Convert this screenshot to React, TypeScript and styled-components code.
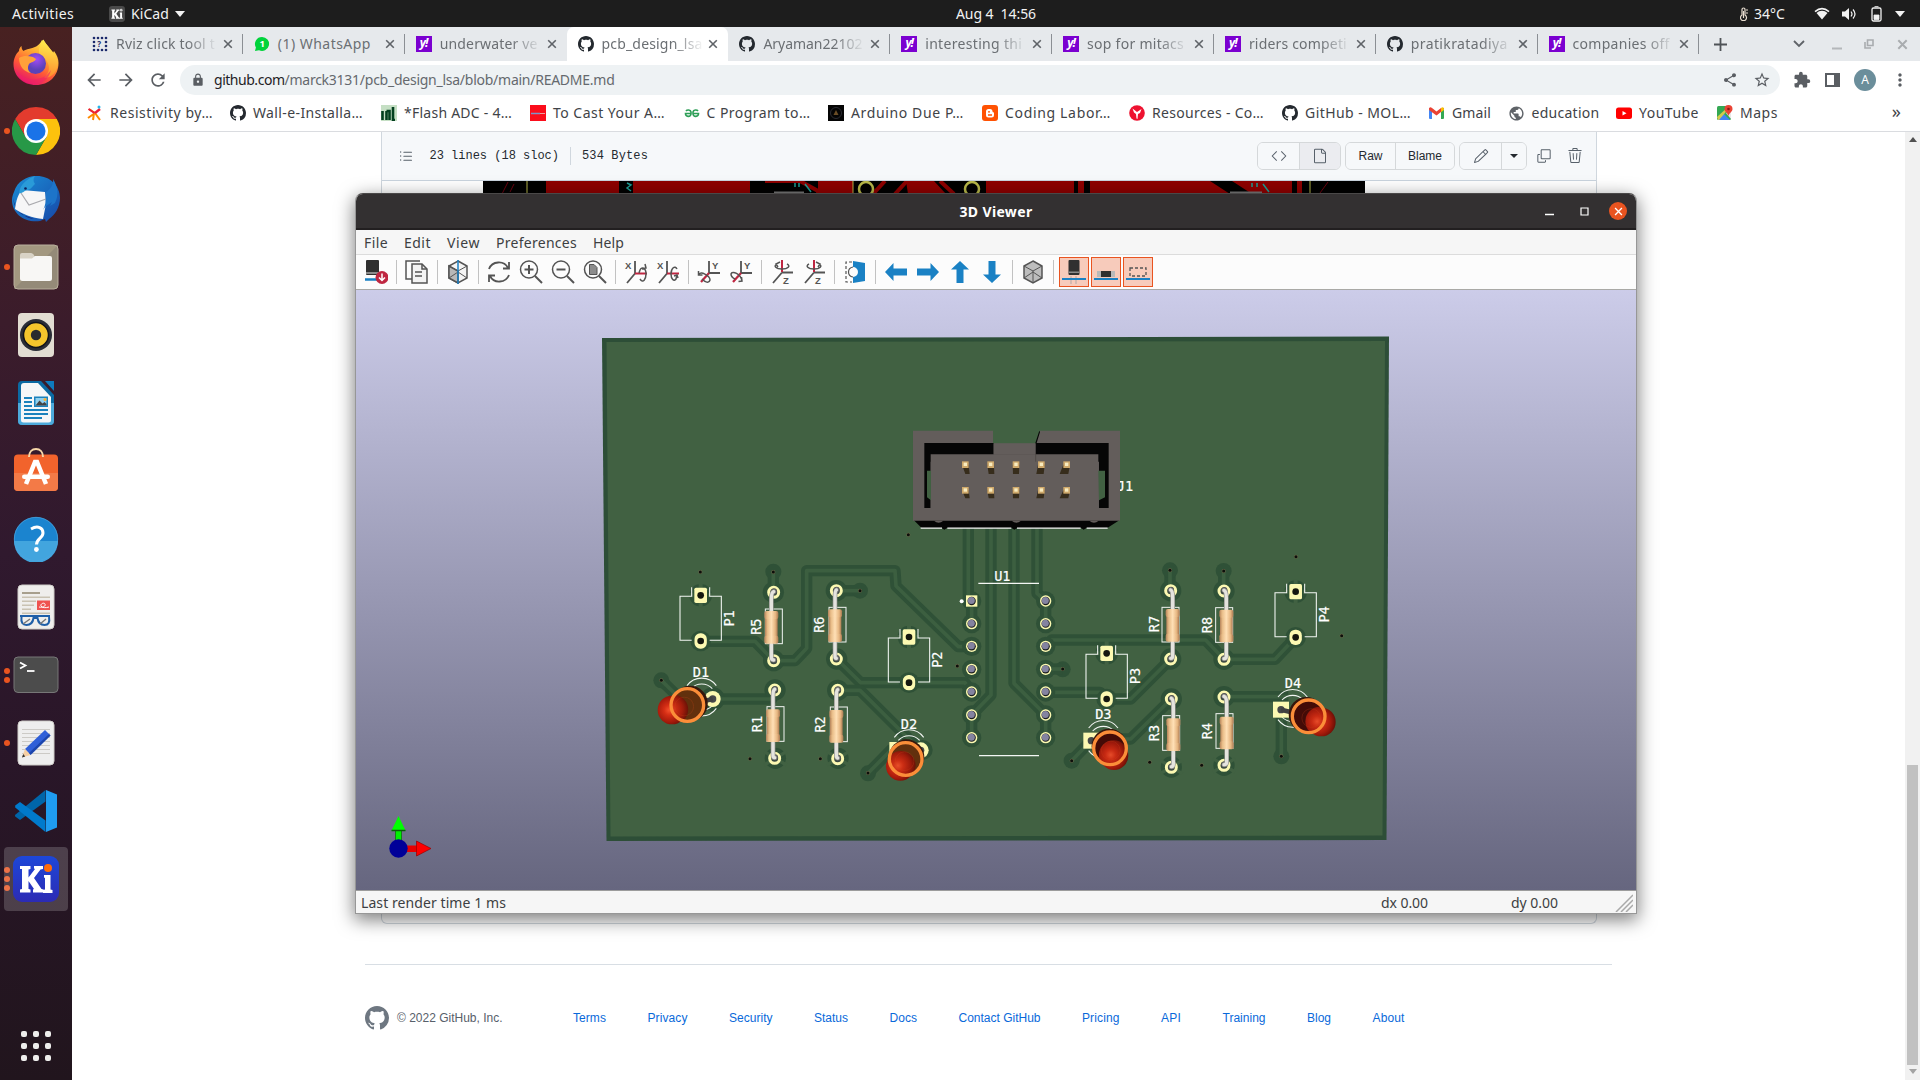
import React, { type ReactNode } from 'react';
import styled, { createGlobalStyle } from 'styled-components';
import { MdArrowBack, MdArrowForward, MdRefresh, MdLock, MdShare, MdStarBorder, MdExtension, MdMoreVert, MdPublic } from 'react-icons/md';
import { GoCode, GoFile, GoPencil, GoCopy, GoTrash, GoListUnordered } from 'react-icons/go';

const UI = '"Noto Sans", "Open Sans", sans-serif';
const ARIAL = '"Liberation Sans", Arial, sans-serif';
const MONO = '"Liberation Mono", "DejaVu Sans Mono", monospace';

const Global = createGlobalStyle`
  * { box-sizing: border-box; }
  html, body { margin: 0; padding: 0; overflow: hidden; background: #fff; }
  svg { display: block; flex: none; }
`;

/* ---------- text tracked to a given run length ---------- */
const pen = document.createElement('canvas').getContext('2d');
function tracking(text: string, font: string, width: number) {
  if (!pen) return 0;
  pen.font = font;
  return (width - pen.measureText(text).width) / text.length;
}
const Run = styled.span<{ $size: number; $weight: number; $family: string; $color?: string; $w: number }>`
  display: block;
  flex: none;
  width: ${p => p.$w}px;
  white-space: pre;
  line-height: 20px;
  font-family: ${p => p.$family};
  font-size: ${p => p.$size}px;
  font-weight: ${p => p.$weight};
  ${p => p.$color && `color: ${p.$color};`}
`;
function Fit({ t, w, size = 14, weight = 400, family = UI, color }: { t: string; w: number; size?: number; weight?: number; family?: string; color?: string }) {
  const ls = tracking(t, `${weight} ${size}px ${family}`, w);
  return <Run $size={size} $weight={weight} $family={family} $color={color} $w={w} style={{ letterSpacing: ls }}>{t}</Run>;
}

/* ---------- shell ---------- */
const Desktop = styled.div`
  position: relative;
  width: 1920px;
  height: 1080px;
  display: flex;
  flex-direction: column;
  overflow: hidden;
  background: #fff;
  font-family: ${UI};
`;
const TopBar = styled.header`
  height: 27px;
  flex: none;
  display: flex;
  align-items: center;
  padding: 0 15px 0 12px;
  background: #1d1d1d;
  color: #f2f2f2;
`;
const BarGroup = styled.div<{ $w: number; $end?: boolean }>`
  width: ${p => p.$w}px;
  flex: none;
  display: flex;
  align-items: center;
  justify-content: ${p => (p.$end ? 'flex-end' : 'flex-start')};
`;
const Gap = styled.i<{ $w: number }>`
  flex: none;
  width: ${p => p.$w}px;
`;
const Body = styled.div`
  flex: 1;
  display: flex;
  min-height: 0;
`;

/* ---------- dock ---------- */
const DockBar = styled.nav`
  width: 72px;
  flex: none;
  display: flex;
  flex-direction: column;
  padding-top: 2px;
  background: linear-gradient(#482121, #3b1c2b 28%, #30192e 50%, #291628 70%, #21151d);
`;
const Slot = styled.div`
  height: 68px;
  flex: none;
  display: flex;
  align-items: center;
`;
const Dots = styled.div`
  width: 6px;
  margin-left: 4px;
  display: flex;
  flex-direction: column;
  gap: 3px;
`;
const Dot = styled.i`
  width: 6px;
  height: 6px;
  border-radius: 50%;
  background: #e95420;
`;
const Tile = styled.div<{ $on?: boolean }>`
  width: 64px;
  height: 64px;
  margin-left: -6px;
  border-radius: 4px;
  display: flex;
  align-items: center;
  justify-content: center;
  background: ${p => (p.$on ? 'rgba(255,255,255,.18)' : 'transparent')};
`;
const GridButton = styled.div`
  margin: auto 0 19px 21px;
  display: grid;
  grid-template-columns: repeat(3, 6px);
  gap: 6px;
  i { height: 6px; border-radius: 2px; background: #eeeeec; }
`;

const Firefox = () => (
  <svg width="48" height="48" viewBox="0 0 48 48">
    <defs>
      <linearGradient id="ff1" x1=".8" y1="0" x2=".3" y2="1"><stop offset="0" stopColor="#fff44f" /><stop offset=".35" stopColor="#ffa932" /><stop offset=".65" stopColor="#ff5a36" /><stop offset="1" stopColor="#e3106f" /></linearGradient>
      <radialGradient id="ff2" cx=".55" cy=".3"><stop offset="0" stopColor="#a24cf5" /><stop offset="1" stopColor="#5b42b8" /></radialGradient>
      <linearGradient id="ff3" x1=".7" y1="0" x2=".6" y2="1"><stop offset="0" stopColor="#fff44f" /><stop offset="1" stopColor="#ff8c2e" /></linearGradient>
    </defs>
    <path d="M24 46C11 46 1.500 37 1.500 25c0-5 2.300-10 5.500-13 0-2 1-4 2.500-5 0 2 .6 4 2 5 1.500-1 3.500-2 5-2 5-1 11-3 13.500-9C35 5 38 9 41 14l1-2c3 4 4.500 8 4.500 12C46.500 37 37 46 24 46z" fill="url(#ff1)" />
    <path d="M27 10c1-4 2-7 4.500-9.500 2 3 3 6 8 11 3 3 6.500 8 6.500 13-1 10-8 15-14 14 5-4 6-9 4-14s-6-8-9-9z" fill="url(#ff3)" />
    <circle cx="23.500" cy="24.500" r="10.500" fill="url(#ff2)" />
    <path d="M7 19c5-3 9-2 14-1l3 2c-1 3-5 3-7 5-2 4-1 7 2 9-7-1-12-7-12-15z" fill="#ffa13a" />
    <path d="M3 28c3 9 13 14 22 12 6-1 10-3 14-9-2 9-9 14-16 14C12 45 5 38 3 28z" fill="#f0206a" opacity=".55" />
  </svg>
);
const Chrome = () => (
  <svg width="48" height="48" viewBox="0 0 48 48">
    <path d="M24 0A24 24 0 0 1 44.800 12H24L13.600 30 3.200 12A24 24 0 0 1 24 0z" fill="#e33b2e" />
    <path d="M44.800 12A24 24 0 0 1 24 48L34.400 30 24 12z" fill="#fcc20d" />
    <path d="M3.200 12A24 24 0 0 0 24 48L34.400 30H13.600z" fill="#279847" />
    <circle cx="24" cy="24" r="12" fill="#fff" /><circle cx="24" cy="24" r="9.500" fill="#1a73e8" />
  </svg>
);
const Thunderbird = () => (
  <svg width="50" height="50" viewBox="0 0 50 50">
    <defs><linearGradient id="tb" x1="0" y1="0" x2="1" y2="1"><stop offset="0" stopColor="#1b8fd6" /><stop offset="1" stopColor="#1747a8" /></linearGradient></defs>
    <path d="M3 18C6 7 17 2 24 2c14-1 25 9 25 22 0 9-5 17-11 21l-3 3-1-3-5 2C14 49 1 40 1 26c0-3 1-6 2-8z" fill="url(#tb)" />
    <path d="M2 24c2 12 11 20 21 21L12 41C6 37 3 32 2 24z" fill="#1c1260" />
    <path d="M4 35C5 27 7 20 11 16l23 2 1 12-3 15c-11-1-21-5-28-10z" fill="#f6f6f7" />
    <path d="M10 19l8 12 17-6" fill="none" stroke="#a9a9ae" strokeWidth="1.200" />
    <path d="M8 19c1-9 9-15 16-17-2 3-2 5 0 8-3 3-5 6-8 6-3 1-5 4-8 3z" fill="#2a9bd8" />
    <path d="M35 18c4-2 8-8 7-13 5 8 6 16 2 24l-5 3 2-4c-4 3-7 4-9 8 3-5 3-12 3-18z" fill="#1d74c9" />
    <circle cx="14.500" cy="14.500" r="1.300" fill="#0d1f5c" />
  </svg>
);
const Files = () => (
  <svg width="46" height="46" viewBox="0 0 46 46">
    <rect x="1" y="1" width="44" height="44" rx="4" fill="#a39880" /><path d="M1 45 45 1v40q0 4-4 4z" fill="#948a78" />
    <rect x="1" y="1" width="44" height="44" rx="4" fill="none" stroke="#b9af9d" />
    <path d="M7 17v-6q0-2 2-2h9q1.500 0 2.500 1.500L22 13v4z" fill="#d9d3c6" />
    <path d="M7 14.500h12l3-2.500h15q2 0 2 2v20.500q0 2.500-2.500 2.500h-27Q7 37 7 34.500z" fill="#f8f7f5" />
  </svg>
);
const Rhythm = () => (
  <svg width="38" height="46" viewBox="0 0 38 46">
    <rect x="1" y="1" width="36" height="44" rx="4" fill="#e2ddd2" /><circle cx="19" cy="23" r="16" fill="#2a2d36" />
    <circle cx="19" cy="23" r="12.500" fill="#f4c52c" stroke="#11131a" strokeWidth="1.500" /><circle cx="19" cy="23" r="5.200" fill="#2a2a2e" />
  </svg>
);
const Writer = () => (
  <svg width="38" height="46" viewBox="0 0 38 46">
    <path d="M5 1h19l13 14v26q0 4-4 4H5q-4 0-4-4V5q0-4 4-4z" fill="#0b6aa3" /><path d="M1 23h36v18q0 4-4 4H5q-4 0-4-4z" fill="#4daadb" />
    <path d="M28 1h9v10z" fill="#0e7bbd" /><path d="M7 3h14l13 14v23q0 2.500-2.500 2.500h-25Q4 42.500 4 40V6q0-3 3-3z" fill="#f5f7f8" />
    <g fill="#1b82bd"><path d="M7 17h8v2H7zM7 21h8v2H7zM7 25h8v2H7zM7 29h24v2H7zM7 33h24v2H7zM7 37h18v2H7z" /><path d="M17 16.500h14v10.500H17z" /></g>
    <path d="M18.500 18h11v7.500h-11z" fill="#8fd0ee" /><path d="m18.500 25.500 4-5 3 3 2-1.500 2 2v1.500z" fill="#444" /><circle cx="28" cy="19.500" r="1.500" fill="#f9b233" />
  </svg>
);
const Software = () => (
  <svg width="46" height="46" viewBox="0 2 46 46">
    <rect x="1" y="8.500" width="44" height="36.500" rx="4" fill="#f2632c" /><path d="M1 27h44v14q0 4-4 4H5q-4 0-4-4z" fill="#f37a47" />
    <path d="M16 11c0-5 3-8 7-8s7 3 7 8" fill="none" stroke="#f6d7a8" strokeWidth="2" />
    <path d="M13 38 22 16h2l9 22" fill="none" stroke="#fff" strokeWidth="4.500" /><rect x="9" y="28.500" width="28" height="4.500" rx="2.200" fill="#fff" />
  </svg>
);
const HelpIcon = () => (
  <svg width="46" height="46" viewBox="0 0 46 46">
    <circle cx="23" cy="23" r="22" fill="#1b84cf" /><path d="M1 25a22 22 0 0 0 44 0z" fill="#42a5de" /><circle cx="23" cy="23" r="21.700" fill="none" stroke="#4ea6df" strokeWidth=".7" />
    <path d="M18 13c7-4 12-1 12 4 0 5-6.500 6-6.500 11.500" fill="none" stroke="#fff" strokeWidth="3" /><circle cx="23.400" cy="33.500" r="2.400" fill="#fff" />
  </svg>
);
const DocViewer = () => (
  <svg width="38" height="46" viewBox="0 0 38 46">
    <rect x="1" y="1" width="36" height="44" rx="4" fill="#efeeec" stroke="#cfcdc9" /><path d="M5 10h18v-2H5z" fill="#a79f8d" />
    <path d="M5 14h28v-1.500H5zM5 18h14v-1.500H5zM5 22h12v-1.500H5zM5 26h9v-1.500H5zM5 30h28v-1.500H5z" fill="#c9c2b2" />
    <path d="M20 16.500h13V26H20z" fill="#ef5350" /><path d="M22 23c4 1 7-1 6-3s-5 0-4 2 5 2 8 1" fill="none" stroke="#fff" />
    <path d="M3 32h30M4.500 33q-1 8 5 8t7-7h4q1 7 7 7t4.500-8" fill="none" stroke="#1f5fa8" strokeWidth="2" /><path d="m6 40 7-5M23 40l6-5" stroke="#777" strokeWidth="1.500" />
  </svg>
);
const Terminal = () => (
  <svg width="46" height="38" viewBox="0 0 46 38">
    <rect x="1" y="1" width="44" height="35.500" rx="4" fill="#4c4c4c" stroke="#777" /><path d="m7 6.500 5.500 3L7 12.500" fill="none" stroke="#fff" strokeWidth="1.800" /><path d="M14 15h7.500" stroke="#fff" strokeWidth="1.800" />
  </svg>
);
const Editor = () => (
  <svg width="38" height="46" viewBox="0 0 38 46">
    <rect x="1" y="1" width="36" height="44" rx="4" fill="#eeeeee" stroke="#cfcdc9" />
    <path d="M5 9.500h28M5 13.500h28M5 17.500h28M5 21.500h28M5 25.500h28M5 29.500h28M5 33.500h28" stroke="#cccac6" />
    <path d="m8 29 20-19 5.500 5.500L13.500 35z" fill="#2f5fd8" /><path d="m12 33 20-19 1.500 1.500L13.500 35z" fill="#1c45ac" /><path d="m8 29 5.500 6L5 37.500z" fill="#f6cfa3" /><path d="m6.200 34 2 2.500L5 37.500z" fill="#333" />
  </svg>
);
const Code = () => (
  <svg width="44" height="44" viewBox="0 0 44 44">
    <path d="M31.500 1v11.500L6 31 1.200 27.500 1 26z" fill="#0065a9" /><path d="M31.500 43V31.500L6 13l-4.800 3.500v2z" fill="#007acc" /><path d="M32 1l11 4.500v33L32 43z" fill="#1f9cf0" />
  </svg>
);
const KiIcon = ({ s = 46, mono }: { s?: number; mono?: boolean }) => (
  <svg width={s} height={s} viewBox="0 0 46 46">
    <defs><linearGradient id="ki" x1="0" y1="0" x2="0" y2="1"><stop offset="0" stopColor="#1d47d8" /><stop offset="1" stopColor="#2c2bb4" /></linearGradient></defs>
    <rect width="46" height="46" rx="9" fill={mono ? '#4a4a4a' : 'url(#ki)'} />
    <path d="M7 10h10.500v3l-2 .5v8L22 13l-1-.5V10h9v3l-2.500.5-6.500 8.500 7.500 11 2 .5v3H20v-3l1-.5-5.500-8v8l2 .5v3H7v-3l2-.5v-20L7 13zM31 19h6.500v14.500l2 .5v3H30v-3l2-.5V22l-1-.5z" fill="#fff" />
    <circle cx="35" cy="12" r="4" fill={mono ? '#ccc' : '#ff6b0a'} />
  </svg>
);

const dock: { icon: ReactNode; dots: number; on?: boolean }[] = [
  { icon: <Firefox />, dots: 0 }, { icon: <Chrome />, dots: 1 }, { icon: <Thunderbird />, dots: 0 }, { icon: <Files />, dots: 1 },
  { icon: <Rhythm />, dots: 0 }, { icon: <Writer />, dots: 0 }, { icon: <Software />, dots: 0 }, { icon: <HelpIcon />, dots: 0 },
  { icon: <DocViewer />, dots: 0 }, { icon: <Terminal />, dots: 2 }, { icon: <Editor />, dots: 1 }, { icon: <Code />, dots: 0 }, { icon: <KiIcon />, dots: 3, on: true },
];

/* ---------- browser ---------- */
const Browser = styled.main`
  flex: 1;
  min-width: 0;
  display: flex;
  flex-direction: column;
`;
const TabStrip = styled.div`
  height: 34px;
  flex: none;
  display: flex;
  padding-left: 9px;
  background: #e6e9ec;
`;
const TabBox = styled.div<{ $on: boolean; $line: boolean }>`
  width: 161.850px;
  flex: none;
  display: flex;
  align-items: center;
  position: relative;
  padding: 0 10px 0 11px;
  color: #6b6f73;
  background: ${p => (p.$on ? '#fff' : 'transparent')};
  border-radius: 7px 7px 0 0;
  &::after {
    content: '';
    position: absolute;
    right: 0;
    top: 7px;
    width: 1px;
    height: 20px;
    background: ${p => (p.$line ? '#8b8f94' : 'transparent')};
  }
`;
const TabTitle = styled.div<{ $fade: boolean }>`
  width: 102px;
  flex: none;
  margin-left: 8px;
  mask-image: ${p => (p.$fade ? 'linear-gradient(90deg, #000 70%, transparent 100%)' : 'none')};
`;
const StripButtons = styled.div`
  flex: 1;
  display: flex;
  align-items: center;
  justify-content: space-between;
  padding: 0 12px 0 15px;
`;
const StripRight = styled.div`
  display: flex;
  align-items: center;
`;
const Toolbar = styled.div`
  height: 38px;
  flex: none;
  display: flex;
  align-items: center;
  padding: 0 10px 0 12px;
  color: #5a5e63;
`;
const NavIcons = styled.div`
  width: 96px;
  display: flex;
  gap: 12px;
`;
const Address = styled.div`
  width: 1600px;
  height: 30px;
  border-radius: 15px;
  background: #eef2f4;
  display: flex;
  align-items: center;
  padding: 0 9px 0 11px;
`;
const Right = styled.div<{ $gap: number }>`
  margin-left: auto;
  display: flex;
  align-items: center;
  gap: ${p => p.$gap}px;
`;
const Avatar = styled.div`
  width: 22px;
  height: 22px;
  border-radius: 50%;
  background: #6b8e9b;
  color: #fff;
  font: 12px/22px ${UI};
  text-align: center;
`;
const Bookmarks = styled.div`
  height: 33px;
  flex: none;
  display: flex;
  align-items: center;
  padding: 0 19px 4px 15px;
  border-bottom: 1px solid #dadce0;
  color: #3f4347;
`;
const Mark = styled.div<{ $w: number }>`
  width: ${p => p.$w}px;
  flex: none;
  display: flex;
  align-items: center;
  gap: 7px;
`;
const More = styled.span`
  margin: -4px 0 0 auto;
  font: 18px/20px ${UI};
`;

const Octocat = ({ s = 16, c = '#24292f' }: { s?: number; c?: string }) => (
  <svg width={s} height={s} viewBox="0 0 16 16" fill={c}>
    <path d="M8 0C3.580 0 0 3.580 0 8c0 3.540 2.290 6.530 5.470 7.590.4.070.55-.17.55-.38 0-.19-.01-.82-.01-1.490-2.010.37-2.530-.49-2.690-.94-.09-.23-.48-.94-.82-1.130-.28-.15-.68-.52-.01-.53.63-.01 1.080.58 1.230.82.72 1.210 1.870.87 2.330.66.070-.52.28-.87.51-1.070-1.780-.2-3.640-.89-3.640-3.950 0-.87.31-1.590.82-2.150-.08-.2-.36-1.020.08-2.120 0 0 .67-.21 2.200.82.64-.18 1.320-.27 2-.27s1.360.09 2 .27c1.530-1.040 2.200-.82 2.200-.82.44 1.100.16 1.920.08 2.120.51.56.82 1.270.82 2.150 0 3.070-1.870 3.750-3.650 3.950.29.25.54.73.54 1.480 0 1.070-.01 1.930-.01 2.200 0 .21.15.46.55.38A8.010 8.010 0 0 0 16 8c0-4.420-3.580-8-8-8z" />
  </svg>
);
const YahooBox = styled.div`
  width: 16px;
  height: 16px;
  flex: none;
  background: #7b00d0;
  color: #fff;
  font: italic 700 12px/14px ${UI};
  letter-spacing: -1px;
  text-align: center;
`;
const Yahoo = () => <YahooBox>y!</YahooBox>;
const DotsFav = () => (
  <svg width="16" height="16" viewBox="0 0 16 16" fill="#1b2a6b">
    {[0, 1, 2, 3].flatMap(r => [0, 1, 2, 3].map(c => ((r === 1 || r === 2) && (c === 1 || c === 2) ? null : <circle key={`${r}${c}`} cx={2 + c * 4} cy={2 + r * 4} r="1.300" />)))}
    <text x="5.200" y="11" fontSize="8" fontFamily={UI} fontWeight="700">?</text>
  </svg>
);
const Whats = () => (
  <svg width="16" height="16" viewBox="0 0 16 16">
    <path d="M8 1a7 7 0 1 1-3 13.300L1 15l.9-3.500A7 7 0 0 1 8 1z" fill="#00d33b" />
    <text x="5.600" y="11.300" fontSize="9.500" fontWeight="700" fill="#fff" fontFamily={UI}>1</text>
  </svg>
);
const Cross = ({ c = '#5f6368', s = 10, w = 1.600 }: { c?: string; s?: number; w?: number }) => (
  <svg width={s} height={s} viewBox="0 0 10 10" stroke={c} strokeWidth={w}><path d="m1.200 1.200 7.600 7.600m0-7.600L1.200 8.800" /></svg>
);

const tabs: { icon: ReactNode; t: string; w: number; on?: boolean }[] = [
  { icon: <DotsFav />, t: 'Rviz click tool t', w: 99 }, { icon: <Whats />, t: '(1) WhatsApp', w: 93 }, { icon: <Yahoo />, t: 'underwater ve', w: 98 },
  { icon: <Octocat />, t: 'pcb_design_lsa', w: 101, on: true }, { icon: <Octocat />, t: 'Aryaman22102', w: 99 }, { icon: <Yahoo />, t: 'interesting thi', w: 97 },
  { icon: <Yahoo />, t: 'sop for mitacs', w: 97 }, { icon: <Yahoo />, t: 'riders competi', w: 98 }, { icon: <Octocat />, t: 'pratikratadiya', w: 97 }, { icon: <Yahoo />, t: 'companies off', w: 97 },
];

const Fig = ({ children }: { children: ReactNode }) => <svg width="16" height="16" viewBox="0 0 16 16">{children}</svg>;
const marks: { icon: ReactNode; t: string; w: number; p: number }[] = [
  { icon: <Fig><path d="M8 8 2 4M8 8 1 13M8 8l5 7M7 8l-1 7" stroke="#ff8a00" strokeWidth="2" /><path d="m8 8 5-4" stroke="#e91e3c" strokeWidth="2.500" /><path d="m1.500 4 6 4" stroke="#e91e3c" strokeWidth="2" /><circle cx="12" cy="2" r="1.500" fill="#28b5e8" /></Fig>, t: 'Resistivity by…', w: 103, p: 143 },
  { icon: <Octocat />, t: 'Wall-e-Installa…', w: 110, p: 151 },
  { icon: <Fig><path fill="#c5dfc4" d="M0 0h16v16H0z" /><path d="M1.500 15V6m4 9V6m0 0h3v9M12 2v13h2" stroke="#03401f" strokeWidth="2.600" fill="none" /></Fig>, t: '*Flash ADC - 4…', w: 108, p: 149 },
  { icon: <Fig><path fill="#fb0d1b" d="M0 0h16v16H0z" /><path d="M1 8.500h9" stroke="#7c95c8" strokeWidth="1.500" /><path d="M10 8.500h5" stroke="#e9a0a0" /></Fig>, t: 'To Cast Your A…', w: 112, p: 153.500 },
  { icon: <Fig><g fill="none" stroke="#2f9f58" strokeWidth="1.600"><path d="M7.500 8.500H1.500C1.500 12 6.500 12.500 7 9V7C6.500 4.500 3 4.500 2 6" /><path d="M8.500 8.500h6C14.500 12 9.500 12.500 9 9V7c.5-2.500 4-2.500 5-1" /></g></Fig>, t: 'C Program to…', w: 104, p: 144.500 },
  { icon: <Fig><path fill="#050505" d="M0 0h16v16H0z" /><path d="m8 5 2.500 5h-5z" fill="#6b4d26" /><circle cx="8" cy="8" r="5.500" fill="none" stroke="#2c2c33" /></Fig>, t: 'Arduino Due P…', w: 113, p: 154 },
  { icon: <Fig><rect width="16" height="16" rx="3" fill="#ff5203" /><path d="M4 6.500A2.500 2.500 0 0 1 6.500 4H8q2.500 0 2.500 2.500.2.800 1.500 1V10q0 2.500-2.500 2.500h-3Q4 12.500 4 10z" fill="#fff" /><path d="M6 6.800h2M6 10h4" stroke="#ff5203" strokeWidth="1.300" /></Fig>, t: 'Coding Labor…', w: 106, p: 147 },
  { icon: <Fig><circle cx="8" cy="8" r="7.800" fill="#ee1230" /><path d="M3.500 3.500 8 7l4.500-3-1.500 4-2 1-.5 5-1-.5L7 9 5 7.500z" fill="#fff" /></Fig>, t: 'Resources - Co…', w: 112, p: 153 },
  { icon: <Octocat />, t: 'GitHub - MOL…', w: 106, p: 147 },
  { icon: <Fig><path d="M0 3h3v11H1q-1 0-1-1z" fill="#4285f4" /><path d="M12 3h3v10q0 1-1 1h-2z" fill="#34a853" /><path d="M0 3.500Q1 1.500 3 3l4.500 3.500L12 3v4l-4.500 3.500L3 7.200 0 5z" fill="#ea4335" /><path d="M12 3q2-1.500 3 .5V5l-3 2.200z" fill="#fbbc04" /></Fig>, t: 'Gmail', w: 39, p: 78.500 },
  { icon: <MdPublic size={17} color="#5f6368" />, t: 'education', w: 68, p: 108.500 },
  { icon: <Fig><rect y="2.500" width="16" height="11.500" rx="2.500" fill="#f00" /><path d="m6.500 6 4 2.300-4 2.300z" fill="#fff" /></Fig>, t: 'YouTube', w: 60, p: 101 },
  { icon: <Fig><rect y="1" width="14" height="14" rx="1.500" fill="#34a853" /><path d="m1 15 6-6 6 6z" fill="#4285f4" /><path d="m9 8 5-3v9z" fill="#e8e8e8" /><path d="m0 12 12-11h2L2 15H1z" fill="#fbd34a" opacity=".8" /><path d="M11.500 0a4 4 0 0 1 4 4c0 2.500-3 3.500-4 7-1-3.500-4-4.500-4-7a4 4 0 0 1 4-4z" fill="#ea4335" /><circle cx="11.500" cy="4" r="1.300" fill="#8b1a12" /></Fig>, t: 'Maps', w: 38, p: 80 },
];

/* ---------- page ---------- */
const Page = styled.div`
  flex: 1;
  display: flex;
  min-height: 0;
`;
const Content = styled.section`
  flex: 1;
`;
const BlobBox = styled.div`
  width: 1216px;
  height: 792px;
  margin-left: 309px;
  border: 1px solid #d0d7de;
  border-top: 0;
  border-radius: 0 0 6px 6px;
`;
const BlobHead = styled.div`
  height: 49px;
  display: flex;
  align-items: center;
  padding: 0 13px 1px 16px;
  background: #f6f8fa;
  border-bottom: 1px solid #c9d3dd;
  color: #24292f;
`;
const Rule = styled.i`
  width: 1px;
  height: 18px;
  margin: 0 11px;
  background: #d0d7de;
`;
const Octicon = styled.span`
  display: block;
  flex: none;
  color: #57606a;
  stroke: #57606a;
  stroke-width: .4px;
`;
const Group = styled.div`
  display: flex;
  height: 28px;
  border: 1px solid #d5d8da;
  border-radius: 6px;
  overflow: hidden;
  margin-right: 4px;
`;
const Seg = styled.div<{ $w: number; $on?: boolean }>`
  width: ${p => p.$w}px;
  display: flex;
  align-items: center;
  justify-content: center;
  background: ${p => (p.$on ? '#ebecf0' : '#f6f8fa')};
  & + & { border-left: 1px solid #d5d8da; }
`;
const Picture = styled.div`
  margin-left: 101px;
`;
const Foot = styled.footer`
  width: 1247px;
  height: 106px;
  margin: 40px 0 0 293px;
  border-top: 1px solid #d8dee4;
  display: flex;
  align-items: center;
`;
const Copyright = styled.div`
  width: 208px;
  display: flex;
  align-items: center;
  gap: 8px;
`;
const LinkRow = styled.div`
  display: flex;
  gap: 41.500px;
`;
const Scroll = styled.div`
  width: 15px;
  background: #f1f1f1;
  display: flex;
  flex-direction: column;
  align-items: center;
  justify-content: space-between;
  padding: 5px 0 6px;
`;
const Thumb = styled.div`
  width: 11px;
  height: 300px;
  margin: auto 0 4px;
  background: #c1c1c1;
`;
const links: [string, number][] = [['Terms', 33], ['Privacy', 40], ['Security', 43.500], ['Status', 34], ['Docs', 27.500], ['Contact GitHub', 82], ['Pricing', 37.500], ['API', 20], ['Training', 43], ['Blog', 24], ['About', 32]];

const Traces = () => (
  <svg width="882" height="13" viewBox="483 181 882 13">
    <path fill="#000" d="M483 181h882v13H483z" />
    <path fill="#8e0000" d="M546 181h73v13h-73zM633 181h117v13H633zM818 181h35v13h-35zM906 181h28l12 13h-38zM986 181h88v13h-88zM1078 181h6v13h-6zM1090 181h120l20 13h-140zM1232 181h60v13h-40zM1297 181h5v13h-5z" />
    <path d="M765 181h35l18 10v3M873 194l12-13M895 194l12-13M940 181l14 13" stroke="#8e0000" strokeWidth="4" fill="none" />
    <g stroke="#b8b84a" fill="none"><path d="M527 181v13M1310 181v13M853 181v13" /><circle cx="866" cy="189" r="7" strokeWidth="2.500" /><circle cx="972" cy="189" r="7" strokeWidth="2.500" /></g>
    <path d="M502 194l6-12M510 192l4-8M1320 193l8-11" stroke="#6e0010" />
    <path d="M627 183l4 2-4 3 4 3M795 183v4M799 183v4M805 184l6 8M1252 183v4M1257 183v4M1263 184l6 8" stroke="#1e9c94" strokeWidth="1.500" fill="none" />
    <path d="M774 192.500h30M1230 192.500h32" stroke="#777" strokeWidth="2" />
  </svg>
);

/* ---------- 3D viewer window ---------- */
const Viewer = styled.div`
  position: absolute;
  left: 355px;
  top: 193px;
  width: 1282px;
  height: 721px;
  display: flex;
  flex-direction: column;
  border: 1px solid #979797;
  border-top-color: #4a4848;
  border-radius: 8px 8px 0 0;
  background: #f6f6f6;
  box-shadow: 0 5px 18px 1px rgba(0, 0, 0, .5);
  color: #3d3f42;
`;
const Title = styled.div`
  height: 36px;
  flex: none;
  display: grid;
  grid-template-columns: 1fr auto 1fr;
  align-items: center;
  padding: 1px 9px 0;
  background: #333031;
  border-bottom: 2px solid #221f20;
  border-radius: 7px 7px 0 0;
`;
const WinButtons = styled.div`
  justify-self: end;
  display: flex;
  align-items: center;
  margin-top: -1px;
`;
const CloseBtn = styled.div`
  width: 18px;
  height: 18px;
  border-radius: 50%;
  background: #e95420;
  display: flex;
  align-items: center;
  justify-content: center;
`;
const MenuRow = styled.div`
  height: 25px;
  flex: none;
  display: flex;
  align-items: center;
  gap: 16px;
  padding: 1px 0 0 8px;
  border-bottom: 1px solid #dcdcdc;
`;
const Tools = styled.div`
  height: 35px;
  flex: none;
  display: flex;
  align-items: center;
  padding-left: 3.500px;
  background: #fcfcfc;
  border-bottom: 1px solid #a9a9a6;
`;
const Tool = styled.div<{ $on?: boolean }>`
  width: 30px;
  height: 30px;
  margin: 0 1px;
  flex: none;
  display: flex;
  align-items: center;
  justify-content: center;
  background: ${p => (p.$on ? '#f7cbbb' : 'transparent')};
  box-shadow: ${p => (p.$on ? 'inset 0 0 0 1px #e95420' : 'none')};
`;
const ToolLine = styled.i`
  width: 1px;
  height: 24px;
  flex: none;
  margin: 0 4px;
  background: #c2c2c2;
`;
const Scene = styled.div`
  height: 600px;
  flex: none;
  background: linear-gradient(#cccce9, #66667f);
`;
const Status = styled.div`
  flex: 1;
  display: flex;
  align-items: center;
  padding: 1px 2px 0 5px;
  border-top: 1px solid #9c9c9c;
`;

const I = ({ children }: { children: ReactNode }) => <svg width="24" height="24" viewBox="0 0 24 24" fill="none" stroke="#545454" strokeWidth="1.500">{children}</svg>;
const Chip = () => <><rect x="6.500" y="0" width="11" height="15" rx="1" fill="#303030" stroke="none" /><path d="M6.500 11.500h11v1.500h-11z" fill="#8a8a8a" stroke="none" /><path d="M9 16v8M14 16v8" stroke="#c9b5ae" /></>;
const Cube = ({ half }: { half?: boolean }) => <><path d="m12 1 9 5v12l-9 5-9-5V6z" fill={half ? '#f4f4f4' : '#bdbdbd'} />{half && <path d="m3 6 9 5v12l-9-5z" fill="#b8b8b8" />}<path d="m3 6 9 5 9-5M12 11v12M3 18l9-6 9 6" strokeWidth="1" />{half && <path d="M12 0v24" stroke="#1a81c4" strokeWidth="1.500" />}</>;
const Arrow = ({ r }: { r: number }) => <I><path d="M1 12 9.500 3v5.500H23v7H9.500V21z" fill="#1a81c4" stroke="none" transform={`rotate(${r} 12 12)`} /></I>;
const axisText = { fontFamily: ARIAL, fontWeight: 700, fontSize: 9.500, fill: '#545454', stroke: 'none' } as const;
const AxisX = ({ ccw }: { ccw?: boolean }) => <I><text x="1" y="8.500" {...axisText}>X</text><path d="M11 1v12.500L3 23" strokeWidth="1.800" /><path d="M11 13.500h12" stroke="#bf2641" strokeWidth="2" /><path d={ccw ? 'M21 9c-2-4-6-1-6 5 0 5 3 8 5 5l1-4m-3 1 3-1 1 3' : 'M16 19c3 5 6 0 6-5 0-6-4-8-6-4l-1 3m6-9 1 4-4 1'} /></I>;
const AxisY = ({ ccw }: { ccw?: boolean }) => <I><text x="15" y="8.500" {...axisText}>Y</text><path d="M12 1v12h11" strokeWidth="1.800" /><path d="m12 13-8 9" stroke="#bf2641" strokeWidth="2.200" /><path d={ccw ? 'M13 21C12 14 3 10 2 14c0 2 2 4 4 5M9.500 21.500l3.500-.5-.5-4' : 'M2 15c1-5 11 1 11 5-1 4-5 2-8-1M1.500 11v4h4'} /></I>;
const AxisZ = ({ ccw }: { ccw?: boolean }) => <I><text x="13" y="23.500" {...axisText}>Z</text><path d="M12 12.500h11M12 12.500 3 23" strokeWidth="1.800" /><path d="M12 0v12" stroke="#bf2641" strokeWidth="2" /><path d={ccw ? 'M17 4c4 2 1 5-5 5S3 6 7 4M14 2l4 2-2 3' : 'M7 4c-4 2-1 5 5 5s9-3 5-5M10 2 6 4l2 3'} /></I>;
const Lens = ({ children }: { children?: ReactNode }) => <I><circle cx="10" cy="9.500" r="8.500" /><path d="m16 16 7 7" strokeWidth="2" />{children}</I>;

const toolGroups: ReactNode[][] = [
  [<I><rect x="2" y="0" width="13" height="15" rx="1" fill="#303030" stroke="none" /><path d="M2 12h13v2H2z" fill="#8a8a8a" stroke="none" /><path d="M1 19.500h12" stroke="#1a81c4" strokeWidth="2.500" /><circle cx="18" cy="17.500" r="6.500" fill="#bf2641" stroke="none" /><path d="M18 13.500v7m-3-3 3 3 3-3" stroke="#fff" /></I>],
  [<I><path d="M15 1H1v18h6" /><path d="M7 4h10l5 5v14H7z" fill="#f3f3f3" /><path d="M17 4v5h5M10 12h7M10 16h7" /></I>],
  [<I><Cube half /></I>],
  [<I><path d="M2 9C5 1 17 0 21 8M22 2v6.500h-6M22 15c-3 8-15 9-19 1M2 22v-6.500h6" strokeWidth="1.800" /></I>, <Lens><path d="M5.500 9.500h9M10 5v9" strokeWidth="2" /></Lens>, <Lens><path d="M5.500 9.500h9" strokeWidth="2" /></Lens>, <Lens><path d="M6.500 4.500h4.500l3 3v7H6.500z" fill="#8c8c8c" strokeWidth="1" /></Lens>],
  [<AxisX />, <AxisX ccw />], [<AxisY />, <AxisY ccw />], [<AxisZ />, <AxisZ ccw />],
  [<I><path d="M9 2H3v20h6" strokeDasharray="3 2" strokeWidth="1.200" /><path d="M10 7c-6 1-6 9 0 10" strokeWidth="1.200" /><path d="m10 1 12 2v18l-12 2v-6a5 5 0 0 0 0-10z" fill="#1a81c4" stroke="none" /></I>],
  [<Arrow r={0} />, <Arrow r={180} />, <Arrow r={90} />, <Arrow r={270} />],
  [<I><Cube /></I>],
];
const toggles: ReactNode[] = [
  <I><Chip /><path d="M0 19h24" stroke="#1a81c4" strokeWidth="2" /></I>,
  <I><path d="M3 11h18v6H3z" fill="#b9b9b9" stroke="none" /><path d="M7 11h10v6H7z" fill="#303030" stroke="none" /><path d="M0 19h24" stroke="#1a81c4" strokeWidth="2" /></I>,
  <I><path d="M4 8h16v8H4z" strokeDasharray="3 2" strokeWidth="1.300" /><path d="M0 19h24" stroke="#1a81c4" strokeWidth="2" /></I>,
];

/* ---------- board ---------- */
type P = { x: number; y: number };
const DARK = '#2f5137';
const PAD = '#fcf9b2';
const Ring = ({ x, y }: P) => <><circle cx={x} cy={y} r="15" fill="#3b4a42" stroke={PAD} strokeWidth="9" /><circle cx={x + 1} cy={y - 3} r="9" fill="#55585a" /></>;
const Pin = ({ x, y, square }: P & { square?: boolean }) => <>{square ? <rect x={x - 17} y={y - 17} width="34" height="34" fill={PAD} /> : <circle cx={x} cy={y} r="17" fill={PAD} />}<circle cx={x} cy={y} r="12.500" fill="#1c1f22" /><circle cx={x - 1} cy={y - 1.500} r="10.500" fill="#8483a0" /></>;
const Via = ({ x, y }: P) => <><circle cx={x} cy={y} r="6" fill="#6b6748" /><circle cx={x} cy={y} r="4.500" fill="#0c0f0b" /></>;
const Silk = ({ x, y, t, up }: P & { t: string; up?: boolean }) => (
  <text transform={`translate(${x} ${y})${up ? ' rotate(-90)' : ''}`} textAnchor="middle" dy="15" fontSize="41" textLength="49" fontFamily='"DejaVu Sans Mono", monospace' fill="#fff" stroke="#fff" strokeWidth=".5">{t}</text>
);
const Resistor = ({ x, y, lean, by }: P & { lean: number; by: number }) => {
  const c = x + lean;
  return (
    <g>
      <rect x={c - 20 + (lean < 0 ? 2 : -12)} y={y + 50} width="51" height="104" fill="none" stroke="#f2f5f2" strokeWidth="3" />
      <Ring x={x} y={y} /><Ring x={x} y={y + 205} />
      <path d={`M${x} ${y - 2} Q${c} ${y} ${c} ${y + 20} V${y + 195} Q${c} ${y + 203} ${x} ${y + 203}`} fill="none" stroke="#8f8f8a" strokeWidth="14" strokeLinecap="round" />
      <path d={`M${x} ${y - 2} Q${c} ${y} ${c} ${y + 20} V${y + 195} Q${c} ${y + 203} ${x} ${y + 203}`} fill="none" stroke="#e4e3de" strokeWidth="10" strokeLinecap="round" />
      <rect x={c - 19} y={y + by + 14} width="38" height="70" fill="url(#body)" />
      <rect x={c - 21} y={y + by} width="42" height="24" rx="6" fill="url(#body)" /><rect x={c - 21} y={y + by + 74} width="42" height="24" rx="6" fill="url(#body)" />
    </g>
  );
};
const Header = ({ x, y }: P) => (
  <g>
    <circle cx={x} cy={y + 137} r="31" fill={DARK} /><circle cx={x} cy={y} r="34" fill={DARK} />
    <path d={`M${x} ${y - 36}v14M${x - 36} ${y}h14M${x + 22} ${y}h14M${x} ${y + 22}v14`} stroke="#416142" strokeWidth="12" />
    <path d={`M${x - 27} ${y - 24}v27h-35v132h35M${x + 27} ${y - 24}v27h35v132h-35`} fill="none" stroke="#f4f7f4" strokeWidth="3.200" />
    <rect x={x - 19} y={y - 23} width="38" height="46" rx="5" fill={PAD} /><rect x={x - 18.500} y={y + 114} width="37" height="46" rx="17" fill={PAD} />
    <circle cx={x} cy={y} r="10" fill="#15170f" /><circle cx={x} cy={y + 137} r="10" fill="#15170f" />
  </g>
);
const Led = ({ x, y, dx, dy, sx, sy, padX, padY, square }: P & { dx: number; dy: number; sx: number; sy: number; padX: number; padY: number; square?: boolean }) => (
  <g>
    <path d={`M${sx - 44} ${sy - 38}a54 54 0 0 1 88 0M${sx - 32} ${sy - 29}a44 44 0 0 1 64 0M${sx - 44} ${sy + 30}a54 54 0 0 0 88 0M${sx - 32} ${sy + 22}a44 44 0 0 0 64 0`} fill="none" stroke="#f2f5f2" strokeWidth="3.200" />
    {square ? <rect x={padX - 24} y={padY - 24} width="48" height="48" fill={PAD} /> : <circle cx={padX} cy={padY} r="24" fill={PAD} />}
    <circle cx={padX} cy={padY} r="11" fill="#46484a" /><path d={`M${padX} ${padY}L${x} ${y}`} stroke="#404040" strokeWidth="14" />
    <circle cx={x - dx * .18} cy={y - dy * .18 - 2} r="53" fill="#35160c" />
    <circle cx={x + dx} cy={y + dy} r="43" fill="url(#dome)" />
    <circle cx={x} cy={y} r="48" fill={square ? '#430b07' : '#62300d'} />
    <clipPath id={`led${x}`}><circle cx={x} cy={y} r="47" /></clipPath>
    <g clipPath={`url(#led${x})`}><circle cx={x + dx * .9} cy={y + dy * .9} r="44" fill="url(#dome)" opacity=".92" /><circle cx={x + dx * .2} cy={y + dy * .3} r="28" fill="none" stroke="#d2481e" strokeWidth="2" opacity=".35" /></g>
    <circle cx={x} cy={y} r="49" fill="none" stroke="#fb8e39" strokeWidth="10" />
  </g>
);

const leftTracks = ['M333 304H495L551 362H615L650 325V92H915L918 138 1105 320H1145', 'M550 95V157', 'M739 152H810', 'M740 357 812 428H1125L1145 457', 'M368 477H545L555 450', 'M214 421 290 495', 'M743 451H810L990 630', 'M834 700 905 628H1000'];
const midTracks = ['M265 340V560L275 573V641', 'M333 340V855L275 915V983', 'M402 340V820L497 915V983', 'M471 340V550L497 573V641', 'M497 777H548'];
const rightTracks = ['M17 320 35 300H497L552 358H705L767 292', 'M17 457H180L200 477H272L392 357', 'M394 477 272 597H240', 'M95 662 150 605', 'M390 91V152', 'M551 93V153', 'M552 470H745', 'M724 510V649'];
const leftHalo: [number, number, number][] = [[550, 95, 24], [550, 157, 32], [551, 362, 32], [739, 152, 32], [810, 152, 24], [740, 357, 32], [555, 450, 32], [556, 655, 32], [743, 451, 32], [744, 655, 32], [214, 421, 24], [834, 700, 24], [368, 477, 36], [998, 630, 30]];
const rightHalo: [number, number, number][] = [[390, 91, 24], [551, 93, 24], [392, 152, 32], [552, 153, 32], [392, 357, 32], [552, 358, 32], [394, 477, 32], [552, 470, 32], [394, 681, 32], [552, 676, 32], [68, 388, 24], [95, 662, 24], [724, 649, 24]];
const pinRows = [573, 641, 709, 778, 846, 915, 983];

const Strokes = ({ d, halo }: { d: string[]; halo?: [number, number, number][] }) => (
  <g fill="none" strokeLinejoin="round">
    <g stroke={DARK} strokeWidth="34">{d.map(v => <path key={v} d={v} />)}</g>
    {halo?.map(([x, y, r]) => <circle key={`${x}-${y}`} cx={x} cy={y} r={r} fill={DARK} />)}
    <g stroke="#3c5f40" strokeWidth="11">{d.map(v => <path key={v} d={v} />)}</g>
  </g>
);
const Thermal = ({ x, y }: P) => <path d={`M${x - 33} ${y - 20}l66 40M${x + 33} ${y - 20}l-66 40`} stroke="#416142" strokeWidth="10" />;

const Connector = () => (
  <g>
    <path d="M101 330 125 354H185l8 5 8-5H395l8 5 8-5H603l8 5 8-5H682L719 330z" fill="#050505" />
    <path d="M122 354.500H186M202 354.500H394M411 354.500H602M620 354.500H683" stroke="#f4f4f4" strokeWidth="4" />
    <path d="M99 62H339V101H467L480 62H720V332H99z" fill="#635d5b" />
    <path d="M478 62 466 99V133H470V99L480 66z" fill="#050505" />
    <path d="M133 99H341V133H467V99H686V294H657V155H152V294H133z" fill="#060606" /><path d="M341 100H467V134H341z" fill="#635d5b" />
    <path d="M152 133H655V294H152z" fill="#635d5b" /><path d="M467 130V155" stroke="#48423f" strokeWidth="2" />
    <path d="M141 182H153V271L141 262z" fill="#416142" /><path d="M655 182H675V262L657 271z" fill="#416142" />
    <path d="M162 332q14 12 28 0zM395 332q14 12 28 0zM628 332q14 12 28 0z" fill="#635d5b" />
    {[164, 241].flatMap((y, r) => [256, 332, 408, 484, 560].map((x, i) => (
      <g key={`${x}${y}`}>
        <path d={`M${x - 10} ${y}h20l${-1 + (2 - i) * 2} ${28 - r * 4}h-18l${-(i - 2) * 4 + (i < 2 ? -3 : 0)} 0z`} fill="#372d1c" />
        <rect x={x - 10} y={y - 10} width="20" height="20" fill="#cfa96b" /><rect x={x - 5} y={y - 6} width="10" height="10" fill="#f8ecc0" />
      </g>
    )))}
  </g>
);

const Board = () => (
  <svg width="1280" height="600" viewBox="356 290 1280 600">
    <defs>
      <linearGradient id="body"><stop offset="0" stopColor="#b5835a" /><stop offset=".2" stopColor="#e9bd88" /><stop offset=".5" stopColor="#ffe0b6" /><stop offset=".8" stopColor="#e6b681" /><stop offset="1" stopColor="#a97952" /></linearGradient>
      <radialGradient id="dome" cx=".4" cy=".5" r=".6"><stop offset="0" stopColor="#f4512c" /><stop offset=".3" stopColor="#d42d14" /><stop offset=".7" stopColor="#a51a0b" /><stop offset="1" stopColor="#6a1006" /></radialGradient>
    </defs>
    <path d="M602 338 1389 336.500 1386.500 840 606.500 841z" fill="#2d4e37" />
    <path d="M606.500 342 1385 341 1382.500 835.500 610.500 836.500z" fill="#416142" />
    <g transform="translate(880 410) scale(.33333)">
      <g transform="translate(-870 390)"><Strokes d={leftTracks} halo={leftHalo} /></g>
      <g transform="translate(480 390)"><Strokes d={rightTracks} halo={rightHalo} /></g>
      <Strokes d={midTracks} halo={pinRows.flatMap(y => [[275, y, 29], [497, y, 29]] as [number, number, number][])} />
      <path d="M295 520H477M297 1037H477" stroke="#f4f7f4" strokeWidth="3.500" />
      <circle cx="245" cy="574" r="6" fill="#fff" />
      <Silk x={367} y={498} t="U1" /><Silk x={735} y={228} t="J1" />
      {pinRows.map((y, i) => <g key={y}><Pin x={275} y={y} square={i === 0} /><Pin x={497} y={y} /></g>)}
      <Via x={85} y={374} /><Via x={232} y={768} /><Via x={548} y={777} />
      <Connector />
      <g transform="translate(-870 390)">
        <Header x={332} y={166} /><Header x={957} y={291} />
        <Thermal x={556} y={655} /><Thermal x={744} y={655} />
        <Resistor x={551} y={157} lean={-7} by={56} /><Resistor x={739} y={152} lean={-4} by={56} />
        <Resistor x={554} y={450} lean={-5} by={58} /><Resistor x={743} y={451} lean={-4} by={59} />
        {[[331, 96], [550, 96], [810, 152], [214, 421], [480, 656], [691, 656], [834, 699]].map(([x, y]) => <Via key={`${x}${y}`} x={x} y={y} />)}
        <Silk x={416} y={235} t="P1" up /><Silk x={498} y={260} t="R5" up /><Silk x={687} y={254} t="R6" up /><Silk x={1041} y={359} t="P2" up />
        <Silk x={502} y={552} t="R1" up /><Silk x={691} y={553} t="R2" up /><Silk x={333} y={397} t="D1" /><Silk x={957} y={552} t="D2" />
        <Led x={292} y={495} dx={-46} dy={15} sx={335} sy={475} padX={368} padY={477} />
        <rect x="898" y="606" width="40" height="44" fill={PAD} />
        <Led x={947} y={657} dx={-16} dy={22} sx={957} sy={630} padX={992} padY={631} />
      </g>
      <g transform="translate(480 390)">
        <Header x={200} y={340} /><Header x={767} y={155} />
        <Thermal x={394} y={681} /><Thermal x={552} y={676} />
        <Resistor x={392} y={152} lean={6} by={55} /><Resistor x={552} y={153} lean={7} by={56} />
        <Resistor x={394} y={477} lean={6} by={58} /><Resistor x={552} y={471} lean={8} by={59} />
        {[[390, 91], [551, 93], [768, 50], [905, 287], [329, 667], [485, 676], [95, 662], [724, 649]].map(([x, y]) => <Via key={`${x}${y}`} x={x} y={y} />)}
        <Silk x={341} y={252} t="R7" up /><Silk x={500} y={255} t="R8" up /><Silk x={852} y={223} t="P4" up /><Silk x={286} y={408} t="P3" up />
        <Silk x={342} y={579} t="R3" up /><Silk x={500} y={573} t="R4" up /><Silk x={190} y={521} t="D3" /><Silk x={759} y={430} t="D4" />
        <Led x={210} y={625} dx={12} dy={22} sx={190} sy={602} padX={154} padY={602} square />
        <Led x={806} y={529} dx={38} dy={17} sx={758} sy={509} padX={723} padY={509} square />
      </g>
    </g>
    <path d="M395.500 842V829h6v13z" fill="#00f000" stroke="#046b04" strokeWidth=".7" /><path d="M398.500 816 405.500 830.500H391.500z" fill="#0f0" /><path d="M391.500 830.500h14" stroke="#056005" strokeWidth="1.500" />
    <path d="M405 845.500h12v6.500h-12z" fill="#e80000" /><path d="M431 848.500 416.500 856V841z" fill="#f00" stroke="#900" strokeWidth=".7" />
    <circle cx="398.500" cy="848.500" r="9.200" fill="#000098" />
  </svg>
);

export default function App() {
  return (
    <Desktop>
      <Global />
      <TopBar>
        <BarGroup $w={944}>
          <Fit t="Activities" w={62} /><Gap $w={35} /><KiIcon s={16} mono /><Gap $w={6} /><Fit t="KiCad" w={38} /><Gap $w={6} />
          <svg width="10" height="6"><path d="M0 0h10L5 6z" fill="#f2f2f2" /></svg>
        </BarGroup>
        <BarGroup $w={80}><Fit t="Aug 4  14:56" w={80} /></BarGroup>
        <BarGroup $w={869} $end>
          <svg width="8" height="14" viewBox="0 0 8 14"><path d="M2 8V2.500a1.500 1.500 0 0 1 3 0V8a3 3 0 1 1-3 0z" fill="none" stroke="#e8ddd0" strokeWidth="1.200" /><path d="M3.500 4v7M6 3h2M6 6h2" stroke="#e8ddd0" strokeWidth="1.200" /></svg>
          <Gap $w={6} /><Fit t="34°C" w={31} /><Gap $w={29} />
          <svg width="16" height="13" viewBox="0 0 16 13"><path d="M8 12.500 2.500 6a8 8 0 0 1 11 0z" fill="#f2f2f2" /><path d="M.5 4Q8-2.500 15.500 4l-1 1.200Q8 0 1.500 5.200z" fill="#f2f2f2" /></svg>
          <Gap $w={12} />
          <svg width="16" height="14" viewBox="0 0 16 14"><path d="M0 4.500h3L7 1v12L3 9.500H0z" fill="#f2f2f2" /><path d="M9 4.500q2 2.500 0 5M11 2.500q4 4.500 0 9" fill="none" stroke="#f2f2f2" strokeWidth="1.200" /></svg>
          <Gap $w={13} />
          <svg width="11" height="16" viewBox="0 0 11 16"><rect x="1" y="2" width="9" height="13" rx="1.500" fill="none" stroke="#f2f2f2" strokeWidth="1.300" /><path d="M3.500.5h4M3 9h5v4.500H3z" fill="#f2f2f2" stroke="#f2f2f2" strokeWidth=".8" /></svg>
          <Gap $w={13} />
          <svg width="10" height="6"><path d="M0 0h10L5 6z" fill="#f2f2f2" /></svg>
        </BarGroup>
      </TopBar>
      <Body>
        <DockBar>
          {dock.map((d, i) => (
            <Slot key={i}><Dots>{Array.from({ length: d.dots }, (_, k) => <Dot key={k} />)}</Dots><Tile $on={d.on}>{d.icon}</Tile></Slot>
          ))}
          <GridButton>{Array.from({ length: 9 }, (_, k) => <i key={k} />)}</GridButton>
        </DockBar>
        <Browser>
          <TabStrip>
            {tabs.map((t, i) => (
              <TabBox key={i} $on={!!t.on} $line={!t.on && i !== 2}>
                {t.icon}<TabTitle $fade={i !== 1}><Fit t={t.t} w={t.w} /></TabTitle><Right $gap={0}><Cross /></Right>
              </TabBox>
            ))}
            <StripButtons>
              <svg width="13" height="13" stroke="#4f5357" strokeWidth="1.800"><path d="M6.500 0v13M0 6.500h13" /></svg>
              <StripRight>
                <svg width="12" height="8" fill="none" stroke="#5f6368" strokeWidth="1.800"><path d="m1 1 5 5 5-5" /></svg><Gap $w={27} />
                <svg width="10" height="12" stroke="#b4b7ba" strokeWidth="2"><path d="M0 10.500h10" /></svg><Gap $w={22} />
                <svg width="10" height="10" fill="none" stroke="#a9acaf" strokeWidth="1.600"><path d="M3.500 1H9v5.500H3.500zM1 3v6h6" /></svg><Gap $w={23} />
                <Cross c="#a9acaf" s={11} w={1.800} />
              </StripRight>
            </StripButtons>
          </TabStrip>
          <Toolbar>
            <NavIcons><MdArrowBack size={20} /><MdArrowForward size={20} /><MdRefresh size={20} /></NavIcons>
            <Address>
              <MdLock size={14} /><Gap $w={9} /><Fit t="github.com" w={70.500} color="#1f2225" /><Fit t="/marck3131/pcb_design_lsa/blob/main/README.md" w={330} color="#65696e" />
              <Right $gap={15}><MdShare size={16} /><MdStarBorder size={18} /></Right>
            </Address>
            <Right $gap={14}>
              <MdExtension size={18} />
              <svg width="15" height="14"><path d="M1 1h13v12H1z" fill="none" stroke="#5a5e63" strokeWidth="2" /><path d="M9 1h5v12H9z" fill="#5a5e63" /></svg>
              <Avatar>A</Avatar><MdMoreVert size={20} />
            </Right>
          </Toolbar>
          <Bookmarks>
            {marks.map(m => <Mark key={m.t} $w={m.p}>{m.icon}<Fit t={m.t} w={m.w} /></Mark>)}
            <More>»</More>
          </Bookmarks>
          <Page>
            <Content>
              <BlobBox>
                <BlobHead>
                  <Octicon><GoListUnordered size={16} /></Octicon><Gap $w={15.500} />
                  <Fit t="23 lines (18 sloc)" w={129.500} size={12} family={MONO} /><Rule /><Fit t="534 Bytes" w={66} size={12} family={MONO} />
                  <Right $gap={0}>
                    <Group><Seg $w={41}><Octicon><GoCode size={16} /></Octicon></Seg><Seg $w={41} $on><Octicon><GoFile size={16} /></Octicon></Seg></Group>
                    <Group><Seg $w={49}><Fit t="Raw" w={24} size={12} family={ARIAL} color="#24292f" /></Seg><Seg $w={59}><Fit t="Blame" w={34} size={12} family={ARIAL} color="#24292f" /></Seg></Group>
                    <Group><Seg $w={41}><Octicon><GoPencil size={16} /></Octicon></Seg><Seg $w={25}><svg width="8" height="4"><path d="M0 0h8L4 4z" fill="#24292f" /></svg></Seg></Group>
                    <Gap $w={5} /><Octicon><GoCopy size={16} /></Octicon><Gap $w={15} /><Octicon><GoTrash size={16} /></Octicon>
                  </Right>
                </BlobHead>
                <Picture><Traces /></Picture>
              </BlobBox>
              <Foot>
                <Copyright><Octocat s={24} c="#6e7781" /><Fit t="© 2022 GitHub, Inc." w={105.500} size={12} family={ARIAL} color="#57606a" /></Copyright>
                <LinkRow>{links.map(([t, w]) => <Fit key={t} t={t} w={w} size={12} family={ARIAL} color="#0969da" />)}</LinkRow>
              </Foot>
            </Content>
            <Scroll>
              <svg width="8" height="5"><path d="M0 5h8L4 0z" fill="#505050" /></svg>
              <Thumb />
              <svg width="8" height="5"><path d="M0 0h8L4 5z" fill="#a3a3a3" /></svg>
            </Scroll>
          </Page>
        </Browser>
      </Body>
      <Viewer>
        <Title>
          <span />
          <Fit t="3D Viewer" w={73} weight={700} color="#fff" />
          <WinButtons>
            <svg width="9" height="10"><path d="M0 8.500h9" stroke="#fff" strokeWidth="1.500" /></svg><Gap $w={25.500} />
            <svg width="9" height="9"><path d="M1 1h7v7H1z" fill="none" stroke="#fff" strokeWidth="1.200" /></svg><Gap $w={20.500} />
            <CloseBtn><Cross c="#fff" s={9} w={1.500} /></CloseBtn>
          </WinButtons>
        </Title>
        <MenuRow>
          <Fit t="File" w={24} /><Fit t="Edit" w={27} /><Fit t="View" w={33} /><Fit t="Preferences" w={81} /><Fit t="Help" w={31} />
        </MenuRow>
        <Tools>
          {toolGroups.map((g, i) => <React.Fragment key={i}>{g.map((t, k) => <Tool key={k}>{t}</Tool>)}<ToolLine /></React.Fragment>)}
          {toggles.map((t, i) => <Tool key={i} $on>{t}</Tool>)}
        </Tools>
        <Scene><Board /></Scene>
        <Status>
          <Fit t="Last render time 1 ms" w={145} />
          <Right $gap={0}>
            <Fit t="dx 0.00" w={47} /><Gap $w={83} /><Fit t="dy 0.00" w={47} /><Gap $w={57} />
            <svg width="18" height="18" stroke="#a9a9a9" strokeWidth="1.500"><path d="M1 18 18 1M6 18 18 6M11 18l7-7" /></svg><Gap $w={1} />
          </Right>
        </Status>
      </Viewer>
    </Desktop>
  );
}
